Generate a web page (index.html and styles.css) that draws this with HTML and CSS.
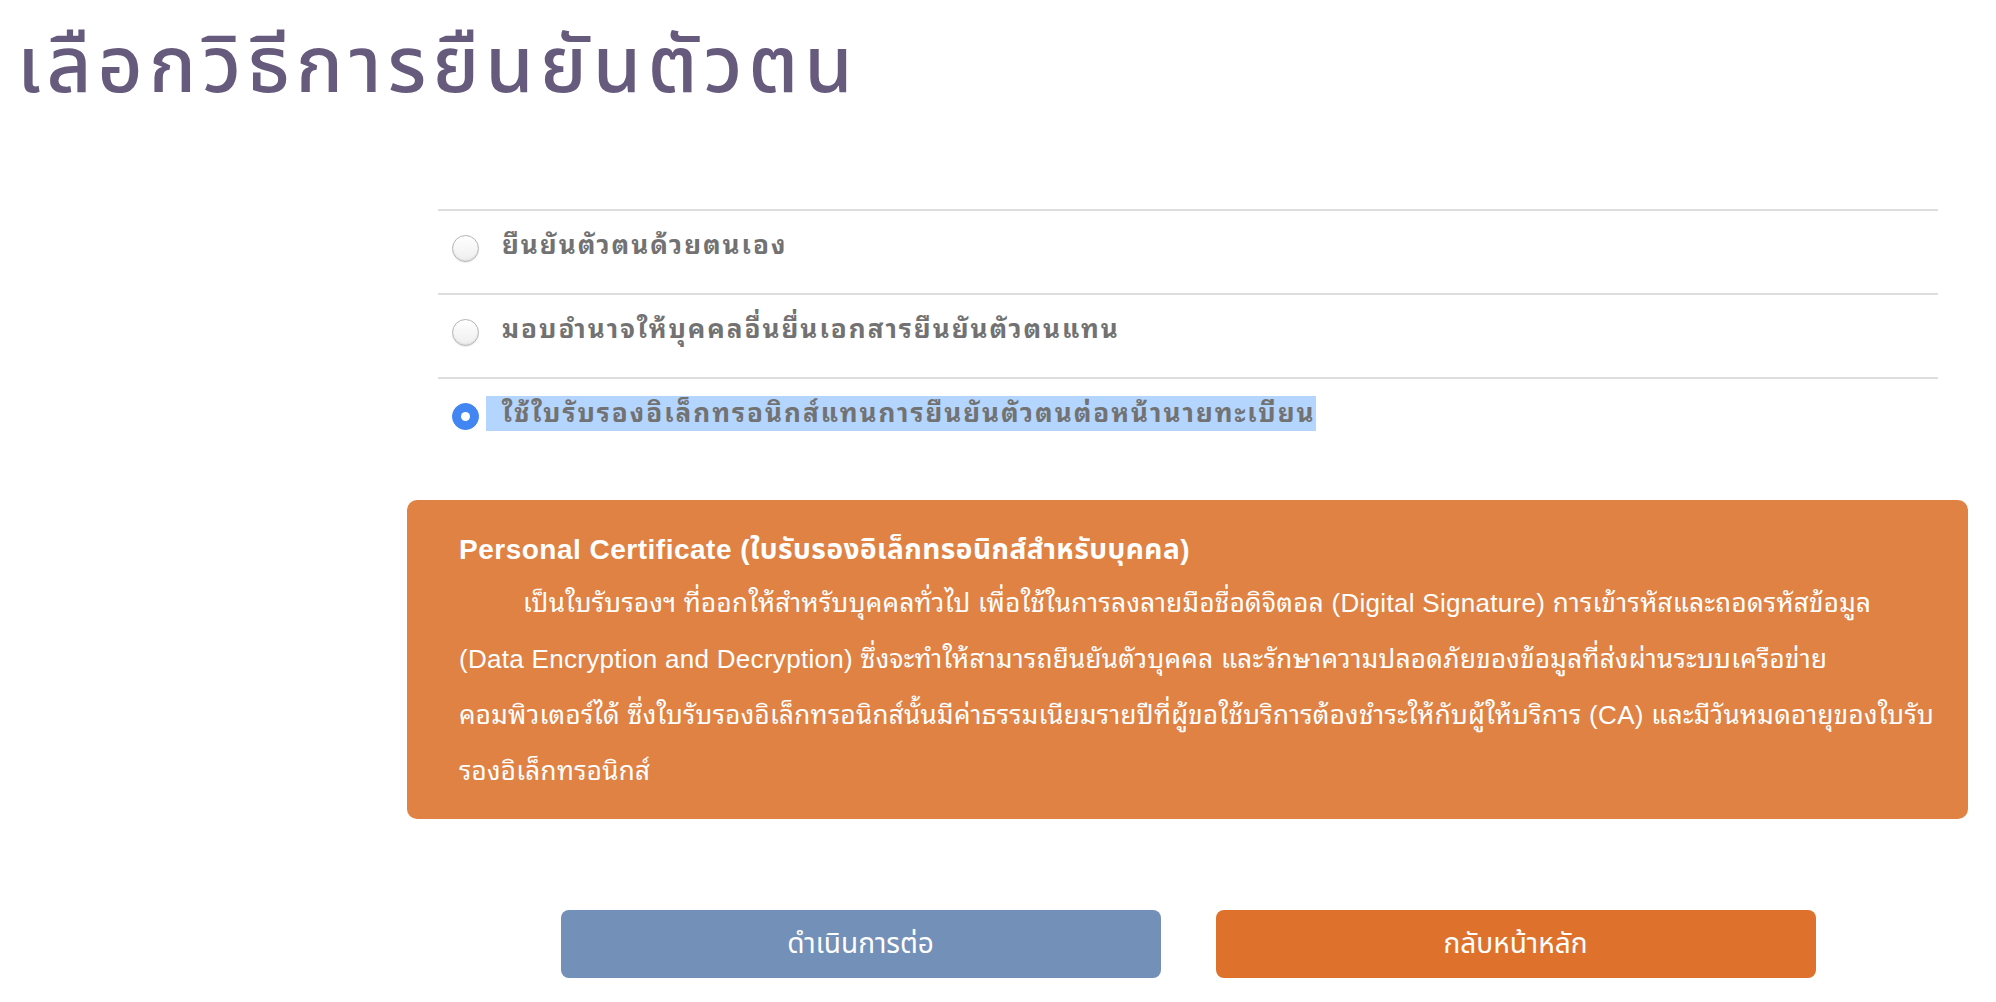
FILE: index.html
```html
<!DOCTYPE html>
<html lang="th">
<head>
<meta charset="utf-8">
<title>เลือกวิธีการยืนยันตัวตน</title>
<link rel="stylesheet" href="styles.css">
</head>
<body>
<h1 class="page-title">เลือกวิธีการยืนยันตัวตน</h1>
<div class="layout">
  <aside class="side"></aside>
  <main class="content">
    <ul class="options">
      <li class="option">
        <span class="radio"></span>
        <span class="option-label">ยืนยันตัวตนด้วยตนเอง</span>
      </li>
      <li class="option">
        <span class="radio"></span>
        <span class="option-label">มอบอำนาจให้บุคคลอื่นยื่นเอกสารยืนยันตัวตนแทน</span>
      </li>
      <li class="option">
        <span class="radio radio-checked"></span>
        <span class="option-label option-label-selected">ใช้ใบรับรองอิเล็กทรอนิกส์แทนการยืนยันตัวตนต่อหน้านายทะเบียน</span>
      </li>
    </ul>
    <section class="info">
      <h2 class="info-title">Personal Certificate (ใบรับรองอิเล็กทรอนิกส์สำหรับบุคคล)</h2>
      <p class="info-text">เป็นใบรับรองฯ ที่ออกให้สำหรับบุคคลทั่วไป เพื่อใช้ในการลงลายมือชื่อดิจิตอล (Digital Signature) การเข้ารหัสและถอดรหัสข้อมูล<br>(Data Encryption and Decryption) ซึ่งจะทำให้สามารถยืนยันตัวบุคคล และรักษาความปลอดภัยของข้อมูลที่ส่งผ่านระบบเครือข่าย<br>คอมพิวเตอร์ได้ ซึ่งใบรับรองอิเล็กทรอนิกส์นั้นมีค่าธรรมเนียมรายปีที่ผู้ขอใช้บริการต้องชำระให้กับผู้ให้บริการ (CA) และมีวันหมดอายุของใบรับ<br>รองอิเล็กทรอนิกส์</p>
    </section>
    <div class="actions">
      <button class="btn btn-next" type="button">ดำเนินการต่อ</button>
      <button class="btn btn-home" type="button">กลับหน้าหลัก</button>
    </div>
  </main>
</div>
</body>
</html>
```
FILE: styles.css
```css
* { box-sizing: border-box; }
html, body { margin: 0; padding: 0; background: #fff; }
body {
  font-family: "Liberation Sans", "Noto Sans Thai", "Noto Sans", sans-serif;
  color: #333;
}
.page-title {
  margin: 0;
  padding: 20px 0 0 17px;
  height: 120px;
  font-size: 78px;
  line-height: 90px;
  font-weight: 500;
  letter-spacing: 6px;
  color: #665b7d;
}
.layout {
  display: flex;
}
.side {
  flex: 0 0 380px;
}
.content {
  flex: 1 1 auto;
  padding-top: 89px;
}
.options {
  list-style: none;
  margin: 0 58px;
  padding: 0;
}
.option {
  display: flex;
  align-items: center;
  height: 84px;
  border-top: 2px solid #dddddd;
  padding: 0 0 8px 14px;
}
.radio {
  flex: 0 0 27px;
  width: 27px;
  height: 27px;
  border-radius: 50%;
  border: 1px solid #b5b5b5;
  background: linear-gradient(#ffffff, #eeeeee);
  box-shadow: inset 0 -1px 2px rgba(0,0,0,0.08), 0 1px 1px rgba(0,0,0,0.08);
  margin-right: 23px;
  position: relative;
}
.radio-checked {
  border-color: #3f83f0;
  background: #4286f4;
  box-shadow: none;
}
.radio-checked::after {
  content: "";
  position: absolute;
  left: 50%;
  top: 50%;
  width: 9px;
  height: 9px;
  margin: -4.5px 0 0 -4.5px;
  border-radius: 50%;
  background: #fff;
}
.option-label {
  font-family: "Liberation Sans", "Noto Sans Thai Looped", "Noto Sans Thai", sans-serif;
  font-size: 26px;
  line-height: 35px;
  font-weight: 700;
  letter-spacing: 2px;
  color: #727272;
  margin-bottom: 6px;
}
.option-label-selected {
  background: #b4d5fd;
  margin-left: -16px;
  padding: 0 0 0 16px;
}
.info {
  margin: 39px 28px 0 27px;
  height: 319px;
  border-radius: 10px;
  background: #df8244;
  color: #fff;
  padding: 32px 20px 0 52px;
}
.info-title {
  margin: 0;
  font-size: 28px;
  line-height: 36px;
  font-weight: 700;
  letter-spacing: 0.5px;
}
.info-text {
  margin: 7px 0 0;
  font-family: "Liberation Sans", "Noto Sans Thai Looped", "Noto Sans Thai", sans-serif;
  font-size: 26px;
  line-height: 56px;
  text-indent: 64px;
  letter-spacing: 0.3px;
  white-space: nowrap;
}
.actions {
  display: flex;
  justify-content: center;
  gap: 55px;
  margin-top: 91px;
}
.btn {
  width: 600px;
  height: 68px;
  border: 0;
  border-radius: 8px;
  font-family: inherit;
  font-size: 28px;
  color: #fff;
  cursor: pointer;
}
.btn-next { background: #7390b9; }
.btn-home { background: #de722d; }
```
